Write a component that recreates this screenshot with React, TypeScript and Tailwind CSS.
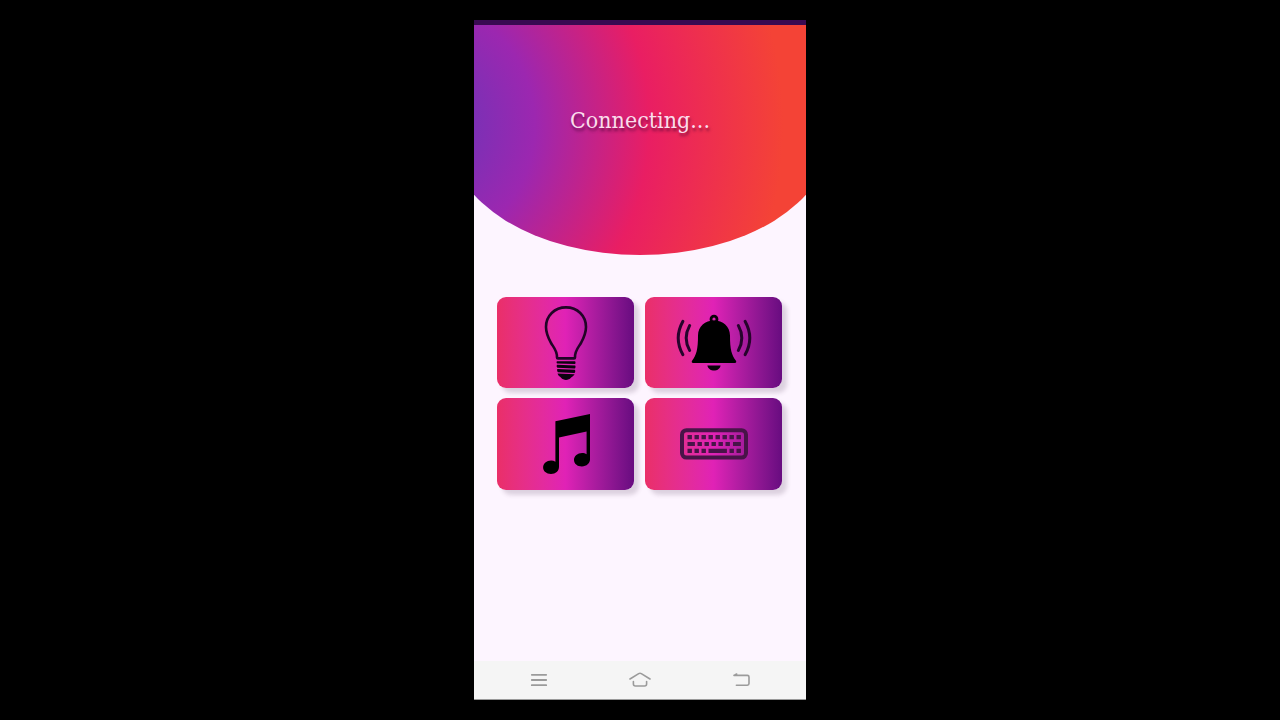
import type { ReactNode } from 'react';

function BulbIcon() {
  return (
    <svg viewBox="0 0 46 76" className="h-19 w-[46px]" fill="none" aria-hidden="true">
      <path
        d="M14 52.4C14.2 45.5 10.6 42.4 8 38C5.4 33.2 3 28.8 3 22C3 10.8 11.6 2.4 23 2.4S43 10.8 43 22C43 28.8 40.6 33.2 38 38C35.4 42.4 31.8 45.5 32 52.4Q32 53.4 31 53.4H15Q14 53.4 14 52.4Z"
        stroke="#210426"
        strokeWidth="2.6"
        strokeLinejoin="round"
      />
      <path
        d="M14.2 56.2H32C32.6 56.2 32.8 58.8 32 59L14.2 58.4C13.3 58 13.4 56.2 14.2 56.2ZM14.2 59.8L32.1 60.5C32.8 60.8 32.6 63.2 31.8 63.4L14.4 62.7C13.5 62.2 13.4 60.1 14.2 59.8ZM14.4 64L31.8 64.7C32.6 65.1 32.4 67.6 31.4 67.9L15 67.2C14 66.8 13.9 64.3 14.4 64ZM14.6 68.4L31.6 69.2C30.8 70.8 29 71.5 27.9 72.8C25.8 75.6 20.2 75.6 18.1 72.8C17 71.3 14.7 70.4 14.6 68.4Z"
        fill="#0d0210"
      />
    </svg>
  );
}

function BellIcon() {
  return (
    <svg viewBox="0 0 76 58" className="h-[58px] w-19" fill="none" aria-hidden="true">
      <circle cx="38" cy="5.2" r="3" stroke="#090109" strokeWidth="2.8" />
      <path
        d="M38 6.6C46.8 6.6 54 12.5 54 21.5C54 35.5 55.6 41 59.8 46.5C60.8 48 60.2 49 58.9 49H17.1C15.8 49 15.2 48 16.2 46.5C20.4 41 22 35.5 22 21.5C22 12.5 29.2 6.6 38 6.6Z"
        fill="#000"
      />
      <path d="M31.4 51.4H44.6C43.4 58.2 32.6 58.2 31.4 51.4Z" fill="#090109" />
      <path
        d="M13.6 11.6C9.2 19.6 9.2 28.4 13.6 36.4M6.8 7.4C0.6 18.6 0.6 29.4 6.8 40.6M62.4 11.6C66.8 19.6 66.8 28.4 62.4 36.4M69.2 7.4C75.4 18.6 75.4 29.4 69.2 40.6"
        stroke="#26042c"
        strokeWidth="3"
        strokeLinecap="round"
      />
    </svg>
  );
}

function MusicIcon() {
  return (
    <svg viewBox="0 0 48 60" className="h-15 w-12" fill="#000" aria-hidden="true">
      <path d="M13.4 7.3L48 0V45.3C48 49.4 44.6 52.4 39.9 52.4C35.3 52.4 32 49.8 32 46C32 42.1 35.6 39.1 40.1 39.1C41.8 39.1 43.4 39.5 44.6 40.2V17.4L17 23.4V52.8C17 57 13.6 60 9 60C4.4 60 1.1 57.3 1.1 53.6C1.1 49.6 4.6 46.6 9.1 46.6C10.7 46.6 12.2 47 13.4 47.7Z" />
    </svg>
  );
}

function KeyboardIcon() {
  return (
    <svg viewBox="0 0 68 32" className="h-8 w-17" fill="none" aria-hidden="true">
      <rect x="2" y="2.2" width="64" height="27.4" rx="4.5" stroke="#481448" strokeWidth="4" />
      <path
        d="M7.5 7h4.4v4.2h-4.4zM14.5 7h4.4v4.2h-4.4zM21.5 7h4.4v4.2h-4.4zM28.5 7h4.4v4.2h-4.4zM35.5 7h4.4v4.2h-4.4zM42.5 7h4.4v4.2h-4.4zM49.5 7h4.4v4.2h-4.4zM56.5 7h4.4v4.2h-4.4zM7.5 13.9h7.4v4.2h-7.4zM17.5 13.9h4.4v4.2h-4.4zM24.5 13.9h4.4v4.2h-4.4zM31.5 13.9h4.4v4.2h-4.4zM38.5 13.9h4.4v4.2h-4.4zM45.5 13.9h4.4v4.2h-4.4zM53 13.9h7.9v4.2h-7.9zM7.5 20.8h4.4v4.2h-4.4zM14.5 20.8h4.4v4.2h-4.4zM21.5 20.8h4.4v4.2h-4.4zM28.5 20.8h18.4v4.2h-18.4zM49.5 20.8h4.4v4.2h-4.4zM56.5 20.8h4.4v4.2h-4.4z"
        fill="#481448"
      />
    </svg>
  );
}

function ControlCard({ label, children }: { label: string; children: ReactNode }) {
  return (
    <button
      type="button"
      aria-label={label}
      className="flex aspect-3/2 items-center justify-center rounded-[9px] bg-linear-to-r from-[#ea2f68] via-[#e022b6] to-[#680c80] shadow-[5px_5px_4px_rgba(70,50,80,0.18)]"
    >
      {children}
    </button>
  );
}

export default function App() {
  return (
    <div className="flex h-screen justify-center bg-black py-5">
      <main className="flex aspect-[332/680] h-full flex-col overflow-hidden bg-[#fdf5ff]">
        <div className="h-[5px] shrink-0 bg-[#390a52]" />
        <header className="overflow-hidden">
          <div className="-mx-6 flex h-[230px] justify-center bg-[radial-gradient(460px_480px_at_-35px_100px,#5f38ba_0%,#9c27b0_26%,#e91e63_51%,#f44336_80%)] pt-[79px] [border-radius:0_0_50%_50%/0_0_51%_51%]">
            <h1 className="font-['DejaVu_Serif_Condensed','DejaVu_Serif',serif] text-[23px] leading-8 text-[#fbdcec] [text-shadow:1px_3px_3px_rgba(60,0,50,0.6)]">
              Connecting...
            </h1>
          </div>
        </header>
        <section aria-label="Controls" className="grid grid-cols-2 gap-x-[11px] gap-y-2.5 pt-[42px] pr-6 pl-[23px]">
          <ControlCard label="Light">
            <BulbIcon />
          </ControlCard>
          <ControlCard label="Alarm">
            <BellIcon />
          </ControlCard>
          <ControlCard label="Music">
            <MusicIcon />
          </ControlCard>
          <ControlCard label="Keyboard">
            <KeyboardIcon />
          </ControlCard>
        </section>
        <nav
          aria-label="System"
          className="mt-auto flex h-[39px] items-center justify-around border-b border-[#9a9a9a] bg-[#f5f5f5] px-3.5 text-[#9b9b9b]"
        >
          <button type="button" aria-label="Recent apps">
            <svg viewBox="0 0 24 16" className="h-4 w-6" fill="none" stroke="currentColor" strokeWidth="1.8" strokeLinecap="round">
              <path d="M4.8 2.8H19.2M4.8 8H19.2M4.8 13.2H19.2" />
            </svg>
          </button>
          <button type="button" aria-label="Home">
            <svg viewBox="0 0 24 16" className="h-4 w-6" fill="none" stroke="currentColor" strokeWidth="1.6" strokeLinecap="round" strokeLinejoin="round">
              <path d="M2 7L10.7 1.6Q12 0.9 13.3 1.6L22 7M5.4 9.5V12Q5.4 14 7.4 14H16.6Q18.6 14 18.6 12V9.5" />
            </svg>
          </button>
          <button type="button" aria-label="Back">
            <svg viewBox="0 0 24 16" className="h-4 w-6" fill="none" stroke="currentColor" strokeWidth="1.6" strokeLinecap="round" strokeLinejoin="round">
              <path d="M5 3.4H18.4Q20 3.4 20 5V11.6Q20 13.2 18.4 13.2H7.4M7.6 2L5 3.4" />
            </svg>
          </button>
        </nav>
      </main>
    </div>
  );
}
